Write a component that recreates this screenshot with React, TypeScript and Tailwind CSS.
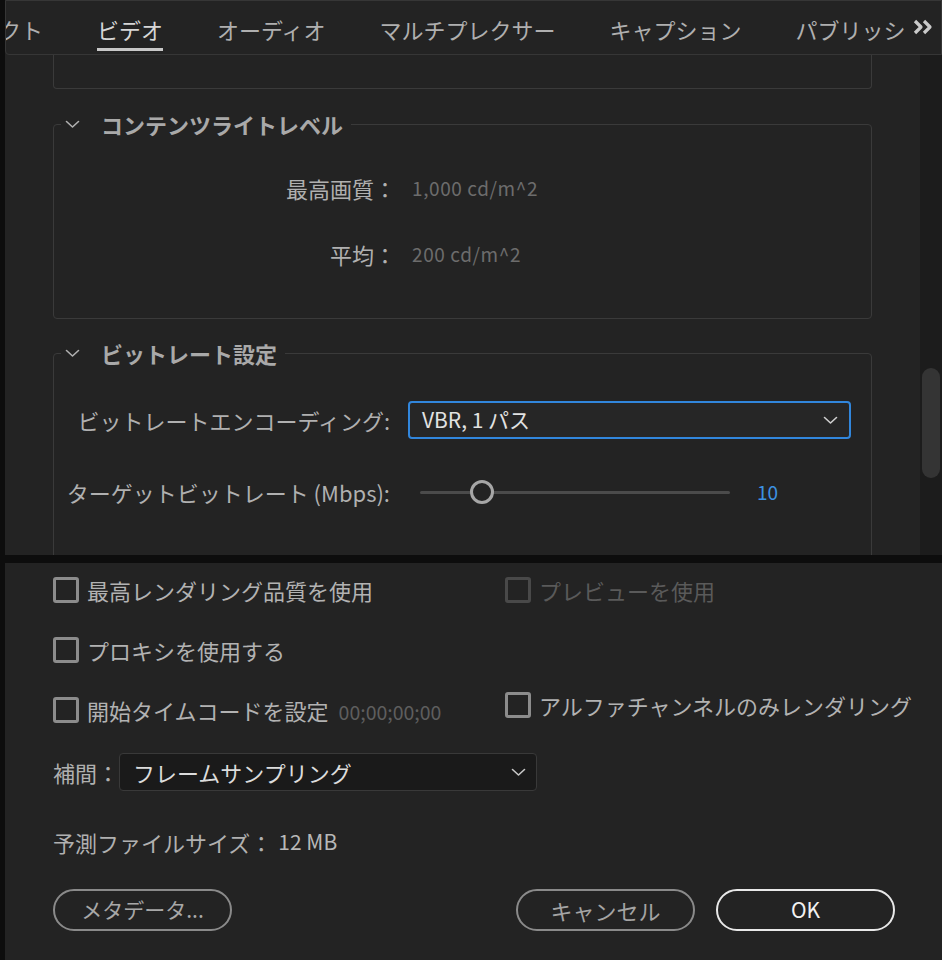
import React from "react";

const FONT = { fontFamily: '"Noto Sans CJK JP", "Noto Sans", sans-serif' };

function ChevronDown({ className = "" }: { className?: string }) {
  return (
    <svg width="15" height="9" viewBox="0 0 15 9" className={className} fill="none">
      <polyline points="1.5,1.5 7.5,7 13.5,1.5" stroke="currentColor" strokeWidth="1.6" strokeLinecap="round" strokeLinejoin="round" />
    </svg>
  );
}

function Section({ title, children, className = "" }: { title: string; children: React.ReactNode; className?: string }) {
  return (
    <fieldset className={`border border-[#3a3a3a] rounded-[4px] ${className}`}>
      <legend className="ml-[7px] pl-[4px] pr-[8px]">
        <span className="flex items-center h-[30px]">
          <ChevronDown className="text-[#b0b0b0] mr-[21px]" />
          <span className="text-[22px] font-bold leading-[30px] text-[#a9a9a9]">{title}</span>
        </span>
      </legend>
      {children}
    </fieldset>
  );
}

function Checkbox({ label, disabled = false, extra }: { label: string; disabled?: boolean; extra?: string }) {
  return (
    <div className="flex items-center h-[30px] whitespace-nowrap">
      <div
        className={`w-[26px] h-[26px] rounded-[3px] border-[3px] shrink-0 ${
          disabled ? "border-[#494949]" : "border-[#8c8c8c]"
        }`}
      />
      <span className={`ml-[8px] text-[22px] leading-[30px] ${disabled ? "text-[#5a5a5a]" : "text-[#b2b2b2]"}`}>
        {label}
      </span>
      {extra && <span className="ml-[10px] text-[19.5px] text-[#5e5e5e] mt-[3px]">{extra}</span>}
    </div>
  );
}

function Tabs() {
  const tabs = ["エフェクト", "ビデオ", "オーディオ", "マルチプレクサー", "キャプション", "パブリッシ"];
  return (
    <div className="h-[55px] border border-[#363636] rounded-bl-[4px] flex shrink-0">
      <div className="flex-1 overflow-hidden flex gap-[54px]">
        {tabs.map((t, i) => (
          <div key={t} className={`flex flex-col shrink-0 pt-[13px] ${i === 0 ? "ml-[-73px]" : ""}`}>
            <span
              className={`text-[22px] leading-[30px] whitespace-nowrap ${
                i === 1 ? "text-[#d6d6d6]" : "text-[#afafaf]"
              }`}
            >
              {t}
            </span>
            <div className={`mt-[4px] h-[3px] ${i === 1 ? "bg-[#c8c8c8]" : ""}`} />
          </div>
        ))}
      </div>
      <div className="w-[32px] shrink-0 flex items-start pt-[18px] pl-[3px]">
        <svg width="22" height="16" viewBox="0 0 22 16" fill="none">
          <polyline points="3,2 9,8 3,14" stroke="#cacaca" strokeWidth="3.2" strokeLinejoin="round" />
          <polyline points="12,2 18,8 12,14" stroke="#cacaca" strokeWidth="3.2" strokeLinejoin="round" />
        </svg>
      </div>
    </div>
  );
}

export default function App() {
  return (
    <div className="w-[942px] h-[960px] bg-[#0d0d0d] flex flex-col overflow-hidden" style={FONT}>
      {/* top pane */}
      <div className="h-[555px] ml-[5px] bg-[#232323] flex flex-col overflow-hidden shrink-0">
        <Tabs />
        <div className="flex flex-1 min-h-0">
          <div className="flex-1 px-[48px] overflow-hidden">
            <div className="h-[34px] border-x border-b border-[#3a3a3a] rounded-b-[4px]" />

            <Section title="コンテンツライトレベル" className="mt-[20px] pt-[30px] pb-[45px]">
              <div className="flex flex-col gap-[28px]">
                <div className="flex items-center h-[38px]">
                  <div className="w-[342px] shrink-0 text-right text-[22px] text-[#b0b0b0]">最高画質：</div>
                  <div className="ml-[16px] text-[19px] tracking-[0.6px] text-[#6c6c6c]">1,000 cd/m^2</div>
                </div>
                <div className="flex items-center h-[38px]">
                  <div className="w-[342px] shrink-0 text-right text-[22px] text-[#b0b0b0]">平均：</div>
                  <div className="ml-[16px] text-[19px] tracking-[0.6px] text-[#6c6c6c]">200 cd/m^2</div>
                </div>
              </div>
            </Section>

            <Section title="ビットレート設定" className="mt-[19px] pt-[33px] pb-[60px]">
              <div className="flex flex-col gap-[34px]">
                <div className="flex items-center h-[38px]">
                  <div className="w-[342px] shrink-0 text-right pr-[6px] text-[22px] text-[#b0b0b0] whitespace-nowrap">
                    ビットレートエンコーディング:
                  </div>
                  <div className="ml-[12px] w-[443px] h-[38px] border-2 border-[#3186dc] rounded-[4px] bg-[#262626] flex items-center pl-[12px] pr-[11px]">
                    <span className="flex-1 text-[21px] text-[#e2e2e2]">VBR, 1 パス</span>
                    <ChevronDown className="text-[#cfcfcf]" />
                  </div>
                </div>
                <div className="flex items-center h-[38px]">
                  <div className="w-[342px] shrink-0 text-right pr-[6px] text-[22px] text-[#b0b0b0] whitespace-nowrap">
                    ターゲットビットレート (Mbps):
                  </div>
                  <div className="ml-[24px] w-[310px] h-[24px] relative flex items-center">
                    <div className="w-full h-[3px] bg-[#4b4b4b] rounded-full" />
                    <div className="absolute left-[50px] top-0 w-[24px] h-[24px] rounded-full border-[3px] border-[#a6a6a6] bg-[#232323]" />
                  </div>
                  <div className="ml-[27px] text-[19px] text-[#3d91e2]">10</div>
                </div>
              </div>
            </Section>
          </div>
          {/* scrollbar */}
          <div className="w-[22px] bg-[#1c1c1c] shrink-0 pl-[2px] pr-[2px] pt-[313px]">
            <div className="h-[110px] rounded-full bg-[#343434]" />
          </div>
        </div>
      </div>

      {/* bottom pane */}
      <div className="mt-[8px] ml-[5px] flex-1 bg-[#232323] px-[48px] pt-[12px]">
        <div className="grid grid-cols-[452px_1fr] gap-y-[30px]">
          <Checkbox label="最高レンダリング品質を使用" />
          <Checkbox label="プレビューを使用" disabled />
          <Checkbox label="プロキシを使用する" />
          <div />
          <Checkbox label="開始タイムコードを設定" extra="00;00;00;00" />
          <div className="self-start -mt-[5px]">
            <Checkbox label="アルファチャンネルのみレンダリング" />
          </div>
        </div>

        <div className="mt-[28px] flex items-center h-[38px]">
          <span className="text-[22px] text-[#b0b0b0]">補間：</span>
          <div className="w-[418px] h-[38px] bg-[#1a1a1a] border border-[#393939] rounded-[4px] flex items-center pl-[13px] pr-[10px]">
            <span className="flex-1 text-[22px] text-[#dcdcdc]">フレームサンプリング</span>
            <ChevronDown className="text-[#c8c8c8]" />
          </div>
        </div>

        <div className="mt-[36px] flex items-center h-[30px]">
          <span className="text-[22px] text-[#b0b0b0]">予測ファイルサイズ：</span>
          <span className="ml-[6px] text-[21px] text-[#b8b8b8]">12 MB</span>
        </div>

        <div className="mt-[32px] flex items-center">
          <button className="w-[179px] h-[42px] rounded-full border-2 border-[#8a8a8a] text-[21px] text-[#a8a8a8]">
            メタデータ...
          </button>
          <div className="ml-auto flex gap-[21px] mr-[-1px]">
            <button className="w-[179px] h-[42px] rounded-full border-2 border-[#8a8a8a] text-[22px] text-[#a4a4a4]">
              キャンセル
            </button>
            <button className="w-[179px] h-[42px] rounded-full border-2 border-[#e8e8e8] text-[21px] text-[#f2f2f2]">
              OK
            </button>
          </div>
        </div>
      </div>
    </div>
  );
}
